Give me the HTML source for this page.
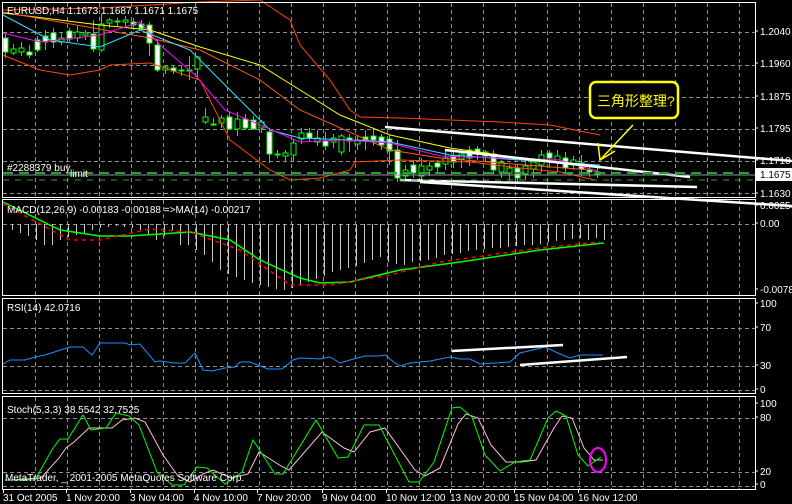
<!DOCTYPE html>
<html><head><meta charset="utf-8"><style>
html,body{margin:0;padding:0;background:#000;width:792px;height:504px;overflow:hidden}
svg{display:block}
text{font-family:"Liberation Sans","Noto Sans CJK TC",sans-serif;font-size:10px;fill:#fff}
</style></head><body>
<svg width="792" height="504" xmlns="http://www.w3.org/2000/svg">
<rect width="792" height="504" fill="#000"/>
<g stroke="#8a8f99" stroke-dasharray="4,3" fill="none">
<path d="M35.5 3V197M67.5 3V197M99.5 3V197M131.5 3V197M163.5 3V197M195.5 3V197M227.5 3V197M259.5 3V197M291.5 3V197M323.5 3V197M355.5 3V197M387.5 3V197M419.5 3V197M451.5 3V197M483.5 3V197M515.5 3V197M547.5 3V197M579.5 3V197M611.5 3V197M643.5 3V197M675.5 3V197M707.5 3V197M739.5 3V197"/>
<path d="M35.5 200V295M67.5 200V295M99.5 200V295M131.5 200V295M163.5 200V295M195.5 200V295M227.5 200V295M259.5 200V295M291.5 200V295M323.5 200V295M355.5 200V295M387.5 200V295M419.5 200V295M451.5 200V295M483.5 200V295M515.5 200V295M547.5 200V295M579.5 200V295M611.5 200V295M643.5 200V295M675.5 200V295M707.5 200V295M739.5 200V295"/>
<path d="M35.5 299V393M67.5 299V393M99.5 299V393M131.5 299V393M163.5 299V393M195.5 299V393M227.5 299V393M259.5 299V393M291.5 299V393M323.5 299V393M355.5 299V393M387.5 299V393M419.5 299V393M451.5 299V393M483.5 299V393M515.5 299V393M547.5 299V393M579.5 299V393M611.5 299V393M643.5 299V393M675.5 299V393M707.5 299V393M739.5 299V393"/>
<path d="M35.5 397V489M67.5 397V489M99.5 397V489M131.5 397V489M163.5 397V489M195.5 397V489M227.5 397V489M259.5 397V489M291.5 397V489M323.5 397V489M355.5 397V489M387.5 397V489M419.5 397V489M451.5 397V489M483.5 397V489M515.5 397V489M547.5 397V489M579.5 397V489M611.5 397V489M643.5 397V489M675.5 397V489M707.5 397V489M739.5 397V489"/>
<path d="M3 32.5H755M3 65.5H755M3 97.5H755M3 129.5H755M3 161.5H755M3 193.5H755M3 224.5H755M3 328.5H755M3 366.5H755M3 390.5H755M3 418.5H755M3 472.5H755M3 486.5H755"/>
</g>
<!-- candles wicks -->
<path stroke="#00ff00" fill="none" d="M5.5 32V58M13.5 44V55M21.5 42V56M29.5 45V58M37.5 36V52M45.5 30V50M53.5 28V48M61.5 32V45M69.5 28V42M77.5 26V42M85.5 30V40M93.5 20V52M101.5 14V52M109.5 18V28M117.5 18V26M125.5 16V26M133.5 18V30M141.5 20V30M149.5 22V56M157.5 40V72M165.5 65V74M173.5 66V74M181.5 66V76M189.5 56V80M197.5 56V80M205.5 108V124M213.5 118V126M221.5 115V128M229.5 112V128M237.5 112V136M245.5 114V130M253.5 116V130M261.5 120V133M269.5 128V163M277.5 150V158M285.5 150V162M293.5 140V162M301.5 128V144M309.5 128V142M317.5 130V146M325.5 132V150M333.5 134V148M341.5 134V155M349.5 134V152M357.5 136V150M365.5 130V150M373.5 128V146M381.5 134V150M389.5 135V165M397.5 140V182M405.5 165V180M413.5 160V178M421.5 158V180M429.5 162V176M437.5 160V172M445.5 150V170M453.5 152V168M461.5 150V168M469.5 146V166M477.5 146V160M485.5 150V162M493.5 150V174M501.5 160V178M509.5 165V180M517.5 164V182M525.5 160V180M533.5 158V178M541.5 150V172M549.5 150V168M557.5 150V172M565.5 152V172M573.5 156V170M581.5 155V176M589.5 164V177M597.5 166V178"/>
<g stroke="#00ff00">
<rect x="3" y="38" width="5" height="14" fill="#fff"/>
<rect x="11" y="49" width="5" height="4" fill="#000"/>
<rect x="19" y="48" width="5" height="4" fill="#000"/>
<rect x="27" y="52" width="5" height="3" fill="#fff"/>
<rect x="35" y="40" width="5" height="10" fill="#fff"/>
<rect x="43" y="36" width="5" height="6" fill="#fff"/>
<rect x="51" y="33" width="5" height="9" fill="#fff"/>
<rect x="59" y="38" width="5" height="4" fill="#000"/>
<rect x="67" y="31" width="5" height="8" fill="#fff"/>
<rect x="75" y="32" width="5" height="6" fill="#000"/>
<rect x="83" y="33" width="5" height="2" fill="#000"/>
<rect x="91" y="34" width="5" height="15" fill="#fff"/>
<rect x="99" y="24" width="5" height="26" fill="#000"/>
<rect x="107" y="20" width="5" height="3" fill="#000"/>
<rect x="115" y="21" width="5" height="1" fill="#000"/>
<rect x="123" y="20" width="5" height="2" fill="#000"/>
<rect x="131" y="22" width="5" height="3" fill="#fff"/>
<rect x="139" y="24" width="5" height="4" fill="#fff"/>
<rect x="147" y="25" width="5" height="18" fill="#fff"/>
<rect x="155" y="45" width="5" height="25" fill="#fff"/>
<rect x="163" y="67" width="5" height="3" fill="#000"/>
<rect x="171" y="68" width="5" height="3" fill="#fff"/>
<rect x="179" y="70" width="5" height="1" fill="#000"/>
<rect x="187" y="70" width="5" height="1" fill="#000"/>
<rect x="195" y="57" width="5" height="12" fill="#000"/>
<rect x="203" y="117" width="5" height="5" fill="#000"/>
<rect x="211" y="124" width="5" height="1" fill="#000"/>
<rect x="219" y="118" width="5" height="5" fill="#000"/>
<rect x="227" y="117" width="5" height="12" fill="#fff"/>
<rect x="235" y="119" width="5" height="10" fill="#000"/>
<rect x="243" y="119" width="5" height="9" fill="#fff"/>
<rect x="251" y="120" width="5" height="9" fill="#fff"/>
<rect x="259" y="122" width="5" height="6" fill="#000"/>
<rect x="267" y="132" width="5" height="22" fill="#fff"/>
<rect x="275" y="154" width="5" height="1" fill="#000"/>
<rect x="283" y="153" width="5" height="3" fill="#000"/>
<rect x="291" y="143" width="5" height="12" fill="#000"/>
<rect x="299" y="133" width="5" height="6" fill="#000"/>
<rect x="307" y="133" width="5" height="5" fill="#fff"/>
<rect x="315" y="138" width="5" height="4" fill="#000"/>
<rect x="323" y="141" width="5" height="5" fill="#fff"/>
<rect x="331" y="138" width="5" height="4" fill="#000"/>
<rect x="339" y="136" width="5" height="16" fill="#000"/>
<rect x="347" y="138" width="5" height="3" fill="#fff"/>
<rect x="355" y="140" width="5" height="4" fill="#000"/>
<rect x="363" y="137" width="5" height="3" fill="#fff"/>
<rect x="371" y="136" width="5" height="4" fill="#fff"/>
<rect x="379" y="137" width="5" height="8" fill="#fff"/>
<rect x="387" y="139" width="5" height="12" fill="#fff"/>
<rect x="395" y="150" width="5" height="28" fill="#fff"/>
<rect x="403" y="170" width="5" height="6" fill="#000"/>
<rect x="411" y="165" width="5" height="8" fill="#fff"/>
<rect x="419" y="166" width="5" height="10" fill="#000"/>
<rect x="427" y="166" width="5" height="4" fill="#000"/>
<rect x="435" y="163" width="5" height="4" fill="#fff"/>
<rect x="443" y="158" width="5" height="6" fill="#000"/>
<rect x="451" y="156" width="5" height="6" fill="#fff"/>
<rect x="459" y="154" width="5" height="5" fill="#000"/>
<rect x="467" y="150" width="5" height="8" fill="#fff"/>
<rect x="475" y="149" width="5" height="5" fill="#fff"/>
<rect x="483" y="152" width="5" height="4" fill="#000"/>
<rect x="491" y="154" width="5" height="16" fill="#fff"/>
<rect x="499" y="162" width="5" height="10" fill="#000"/>
<rect x="507" y="168" width="5" height="5" fill="#000"/>
<rect x="515" y="168" width="5" height="10" fill="#fff"/>
<rect x="523" y="166" width="5" height="8" fill="#000"/>
<rect x="531" y="162" width="5" height="7" fill="#000"/>
<rect x="539" y="155" width="5" height="10" fill="#000"/>
<rect x="547" y="153" width="5" height="5" fill="#fff"/>
<rect x="555" y="156" width="5" height="6" fill="#000"/>
<rect x="563" y="158" width="5" height="10" fill="#fff"/>
<rect x="571" y="160" width="5" height="5" fill="#000"/>
<rect x="579" y="163" width="5" height="6" fill="#fff"/>
<rect x="587" y="170" width="5" height="2" fill="#fff"/>
<rect x="595" y="172" width="5" height="2" fill="#000"/>
</g>
<g fill="none" stroke-width="1">
<polyline stroke="#ff4500" points="3,10 100,8 150,5 200,2 260,0 290,20 300,45 330,80 350,110 360,117 400,118 500,122 550,125 600,135"/>
<polyline stroke="#ff4500" points="3,55 40,70 70,75 100,70 110,65 150,63 200,80 230,140 270,170 290,180 320,178 350,170 355,162 400,160 470,162 520,168 560,172 595,180"/>
<polyline stroke="#ffff00" points="3,13 100,25 150,30 200,47 260,65 300,90 340,115 390,135 450,148 520,158 600,168"/>
<polyline stroke="#ff5a1a" points="3,12 150,38 200,50 260,80 300,110 390,150 440,158 500,163 590,170"/>
<polyline stroke="#33e0ff" points="3,15 50,40 100,47 140,30 190,50 230,90 270,130 300,138 350,140 390,142 450,155 520,160 600,165"/>
<polyline stroke="#ff00ff" points="3,33 40,42 100,35 140,22 160,45 195,75 225,110 260,125 300,142 340,140 390,143 440,156 500,158 560,160 600,172"/>
</g>
<g stroke="#fff" stroke-width="2.5" fill="none">
<line x1="385" y1="127" x2="792" y2="161"/>
<line x1="445" y1="150" x2="690" y2="177"/>
<line x1="400" y1="180" x2="697" y2="187"/>
<line x1="420" y1="182" x2="792" y2="206"/>
</g>
<line x1="3" y1="175" x2="755" y2="175" stroke="#8a8f99"/>
<line x1="3" y1="173" x2="755" y2="173" stroke="#2aa02a" stroke-width="2" stroke-dasharray="10,6"/>
<line x1="3" y1="180" x2="755" y2="180" stroke="#2aa02a" stroke-dasharray="6,6"/>
<text x="7" y="171">#2288379 buy</text><text x="70" y="177" font-size="9">limit</text>
<text x="7" y="14">EURUSD,H4  1.1673 1.1687 1.1671 1.1675</text>
<rect x="590" y="82" width="88" height="36" rx="6" fill="#000" stroke="#ff0" stroke-width="2.5"/>
<text x="597" y="106" style="fill:#ff0;font-size:14px">三角形整理?</text>
<g stroke="#ff0" stroke-width="1.5" fill="none"><line x1="633" y1="125" x2="600" y2="160"/><polyline points="598,143 600,160 615,151"/></g>
<!-- MACD -->
<path stroke="#c8c8c8" fill="none" d="M12.5 224V230M20.5 224V233M28.5 224V236M36.5 224V240M44.5 224V245M52.5 224V245M60.5 224V240M68.5 224V237M76.5 224V235M84.5 224V233M92.5 224V230M100.5 224V228M108.5 224V227M116.5 224V226M124.5 224V227M132.5 224V228M140.5 224V230M148.5 224V234M156.5 224V240M164.5 224V236M172.5 224V230M180.5 224V245M188.5 224V245M196.5 224V250M204.5 224V255M212.5 224V262M220.5 224V270M228.5 224V274M236.5 224V277M244.5 224V280M252.5 224V283M260.5 224V285M268.5 224V287M276.5 224V289M284.5 224V290M292.5 224V288M300.5 224V285M308.5 224V282M316.5 224V279M324.5 224V276M332.5 224V272M340.5 224V270M348.5 224V268M356.5 224V266M364.5 224V263M372.5 224V260M380.5 224V257M388.5 224V262M396.5 224V264M404.5 224V265M412.5 224V262M420.5 224V261M428.5 224V260M436.5 224V258M444.5 224V255M452.5 224V254M460.5 224V253M468.5 224V251M476.5 224V250M484.5 224V249M492.5 224V248M500.5 224V248M508.5 224V247M516.5 224V246M524.5 224V245M532.5 224V245M540.5 224V244M548.5 224V242M556.5 224V241M564.5 224V240M572.5 224V239M580.5 224V238M588.5 224V240M596.5 224V238M604.5 224V240"/>
<polyline fill="none" stroke="#00ff00" stroke-width="1.5" points="3,202 60,230 100,236 130,236 190,232 230,240 260,260 300,278 320,283 350,282 400,270 460,262 540,250 604,243"/>
<polyline fill="none" stroke="#ff0000" stroke-width="1.5" stroke-dasharray="4,4" points="3,204 70,240 100,240 150,229 190,232 240,250 290,285 330,285 390,275 440,262 540,248 600,242"/>
<text x="7" y="213">MACD(12,26,9) -0.00183 -0.00188  =&gt;MA(14) -0.00217</text>
<!-- RSI -->
<polyline fill="none" stroke="#1e90ff" points="3,364 10,360 25,360 35,357 45,355 70,347 83,347 92,355 100,343 125,343 130,345 140,344 155,362 160,361 175,363 185,363 195,353 203,370 212,371 225,368 235,367 240,362 250,362 255,364 268,369 282,369 293,360 300,358 320,359 330,357 340,363 350,360 365,356 378,356 385,355 395,363 400,366 410,363 420,362 430,361 445,358 450,357 460,359 470,359 480,364 495,363 510,362 520,353 545,347 560,354 570,358 580,355 590,355 603,355"/>
<g stroke="#fff" stroke-width="2.5"><line x1="452" y1="351" x2="563" y2="345"/><line x1="520" y1="365" x2="627" y2="357"/></g>
<text x="7" y="311">RSI(14) 42.0716</text>
<!-- Stoch -->
<polyline fill="none" stroke="#ffc0cb" points="11,480 41,478 59,458 66,448 74,442 89,428 97,428 112,428 122,420 135,418 145,422 163,455 178,476 190,482 203,474 213,470 231,478 248,474 259,452 281,466 289,470 322,432 344,448 354,452 370,432 385,428 415,470 425,476 440,468 458,424 466,414 478,418 491,445 506,462 521,462 536,460 554,428 562,416 572,418 584,448 594,460 603,460"/>
<polyline fill="none" stroke="#00ff00" points="5,480 35,480 53,448 60,439 68,439 83,415 91,430 106,428 116,413 129,416 139,425 157,472 172,485 184,485 197,467 207,468 225,484 242,472 253,440 275,474 283,474 316,420 338,458 348,457 364,425 379,425 409,482 419,482 434,462 452,408 460,407 472,417 485,455 500,471 515,462 530,460 548,418 556,411 566,416 578,455 588,466 601,457"/>
<ellipse cx="598" cy="460" rx="8" ry="12" fill="none" stroke="#ff00ff" stroke-width="2"/>
<text x="7" y="413">Stoch(5,3,3) 38.5542 32.7525</text>
<text x="5" y="481">MetaTrader, _ 2001-2005 MetaQuotes Software Corp.</text>
<g fill="none" stroke="#fff" stroke-width="1">
<rect x="2.5" y="2.5" width="753" height="195"/>
<rect x="2.5" y="199.5" width="753" height="96"/>
<rect x="2.5" y="298.5" width="753" height="95"/>
<rect x="2.5" y="396.5" width="753" height="93"/>
<path d="M755 31H758M755 63H758M755 96H758M755 128H758M755 160H758M755 193H758M755 205H758M755 223H758M755 289H758M755 303H758M755 327H758M755 365H758M755 389H758M755 403H758M755 417H758M755 471H758M755 484H758M3.5 490V493M66.5 490V493M130.5 490V493M194.5 490V493M257.5 490V493M322.5 490V493M386.5 490V493M450.5 490V493M514.5 490V493M578.5 490V493"/>
</g>
<g>
<text x="760" y="35">1.2040</text><text x="760" y="67">1.1960</text><text x="760" y="100">1.1875</text><text x="760" y="132">1.1795</text><text x="760" y="164">1.1710</text><text x="760" y="197">1.1630</text>
<text x="760" y="209">0.00254</text><text x="760" y="227">0.00</text><text x="760" y="293">-0.0078</text>
<text x="760" y="307">100</text><text x="760" y="331">70</text><text x="760" y="369">30</text><text x="760" y="393">0</text>
<text x="760" y="407">100</text><text x="760" y="421">80</text><text x="760" y="475">20</text><text x="760" y="488">0</text>
<text x="3" y="501">31 Oct 2005</text><text x="66" y="501">1 Nov 20:00</text><text x="130" y="501">3 Nov 04:00</text><text x="194" y="501">4 Nov 10:00</text><text x="257" y="501">7 Nov 20:00</text><text x="322" y="501">9 Nov 04:00</text><text x="386" y="501">10 Nov 12:00</text><text x="450" y="501">13 Nov 20:00</text><text x="514" y="501">15 Nov 04:00</text><text x="578" y="501">16 Nov 12:00</text>
</g>
<rect x="756" y="168" width="36" height="13" fill="#fff"/>
<text x="760" y="178" style="fill:#000">1.1675</text>
</svg>
</body></html>
